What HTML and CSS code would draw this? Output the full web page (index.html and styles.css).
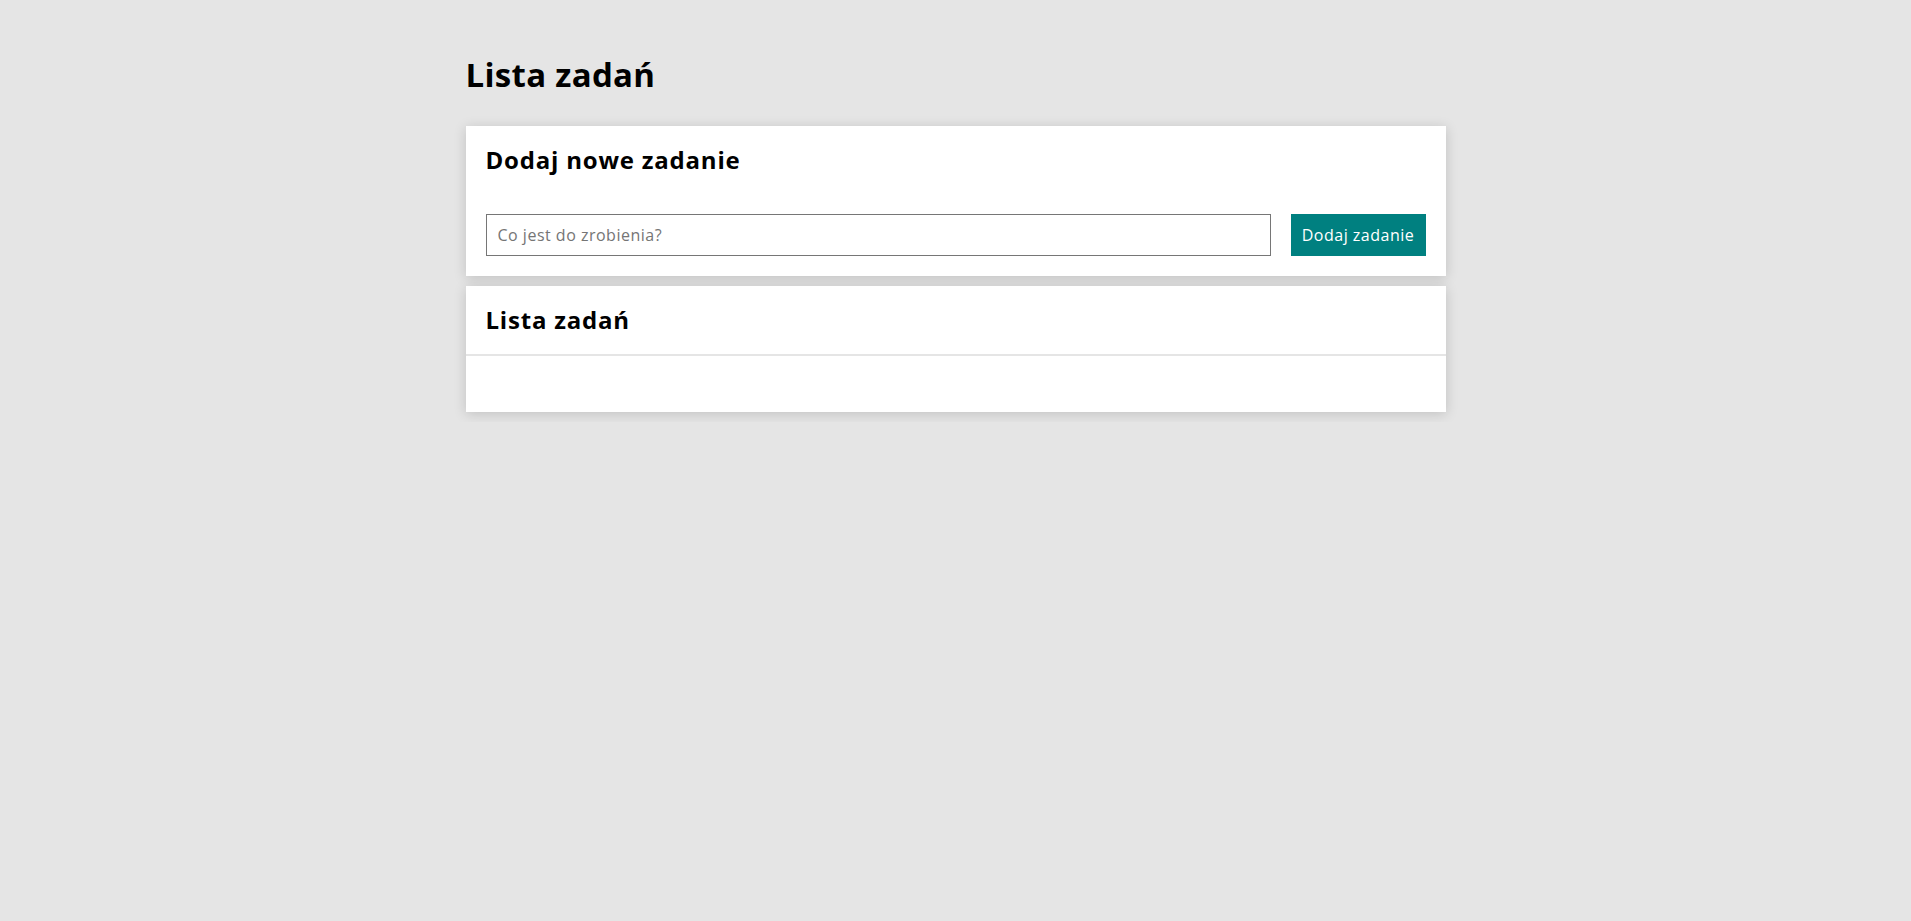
FILE: index.html
```html
<!DOCTYPE html>
<html lang="pl">
<head>
<meta charset="utf-8">
<title>Lista zadań</title>
<link rel="stylesheet" href="styles.css">
</head>
<body>
<main class="container">
  <h1 class="page-title">Lista zadań</h1>
  <section class="card">
    <h2 class="card-title">Dodaj nowe zadanie</h2>
    <form class="add-form">
      <input class="add-input" type="text" placeholder="Co jest do zrobienia?">
      <button class="add-button" type="button">Dodaj zadanie</button>
    </form>
  </section>
  <section class="card card-list">
    <header class="list-header">
      <h2 class="card-title">Lista zadań</h2>
    </header>
    <ul class="task-list"></ul>
  </section>
</main>
</body>
</html>
```
FILE: styles.css
```css
* { box-sizing: border-box; }
html, body { margin: 0; padding: 0; }
body {
  background: #e5e5e5;
  font-family: "Open Sans", "Liberation Sans", sans-serif;
  color: #000;
}
.container {
  max-width: 980px;
  margin: 0 auto;
  padding-top: 55px;
}
.page-title {
  margin: 0 0 31px;
  font-size: 33px;
  line-height: 40px;
  font-weight: 700;
  letter-spacing: 0.3px;
}
.card {
  background: #fff;
  box-shadow: 0 2px 12px rgba(0, 0, 0, 0.16);
  padding: 20px;
  margin-bottom: 10px;
}
.card-title {
  margin: 0;
  font-size: 24px;
  line-height: 28px;
  font-weight: 700;
  letter-spacing: 0.8px;
}
.add-form {
  display: flex;
  gap: 20px;
  margin-top: 40px;
}
.add-input {
  flex: 1;
  height: 42px;
  border: 1px solid #767676;
  padding: 0 11px;
  font: inherit;
  font-size: 16px;
  letter-spacing: 0.5px;
  color: #000;
  outline: none;
}
.add-input::placeholder { color: #757575; }
.add-button {
  height: 42px;
  width: 135px;
  border: none;
  background: #008080;
  color: #fff;
  font: inherit;
  font-size: 16px;
  letter-spacing: 0.5px;
  padding: 0;
  cursor: pointer;
}
.card-list { padding: 0; }
.list-header {
  padding: 20px;
  border-bottom: 2px solid #e5e5e5;
}
.task-list {
  list-style: none;
  margin: 0;
  padding: 0;
  min-height: 56px;
}
```
